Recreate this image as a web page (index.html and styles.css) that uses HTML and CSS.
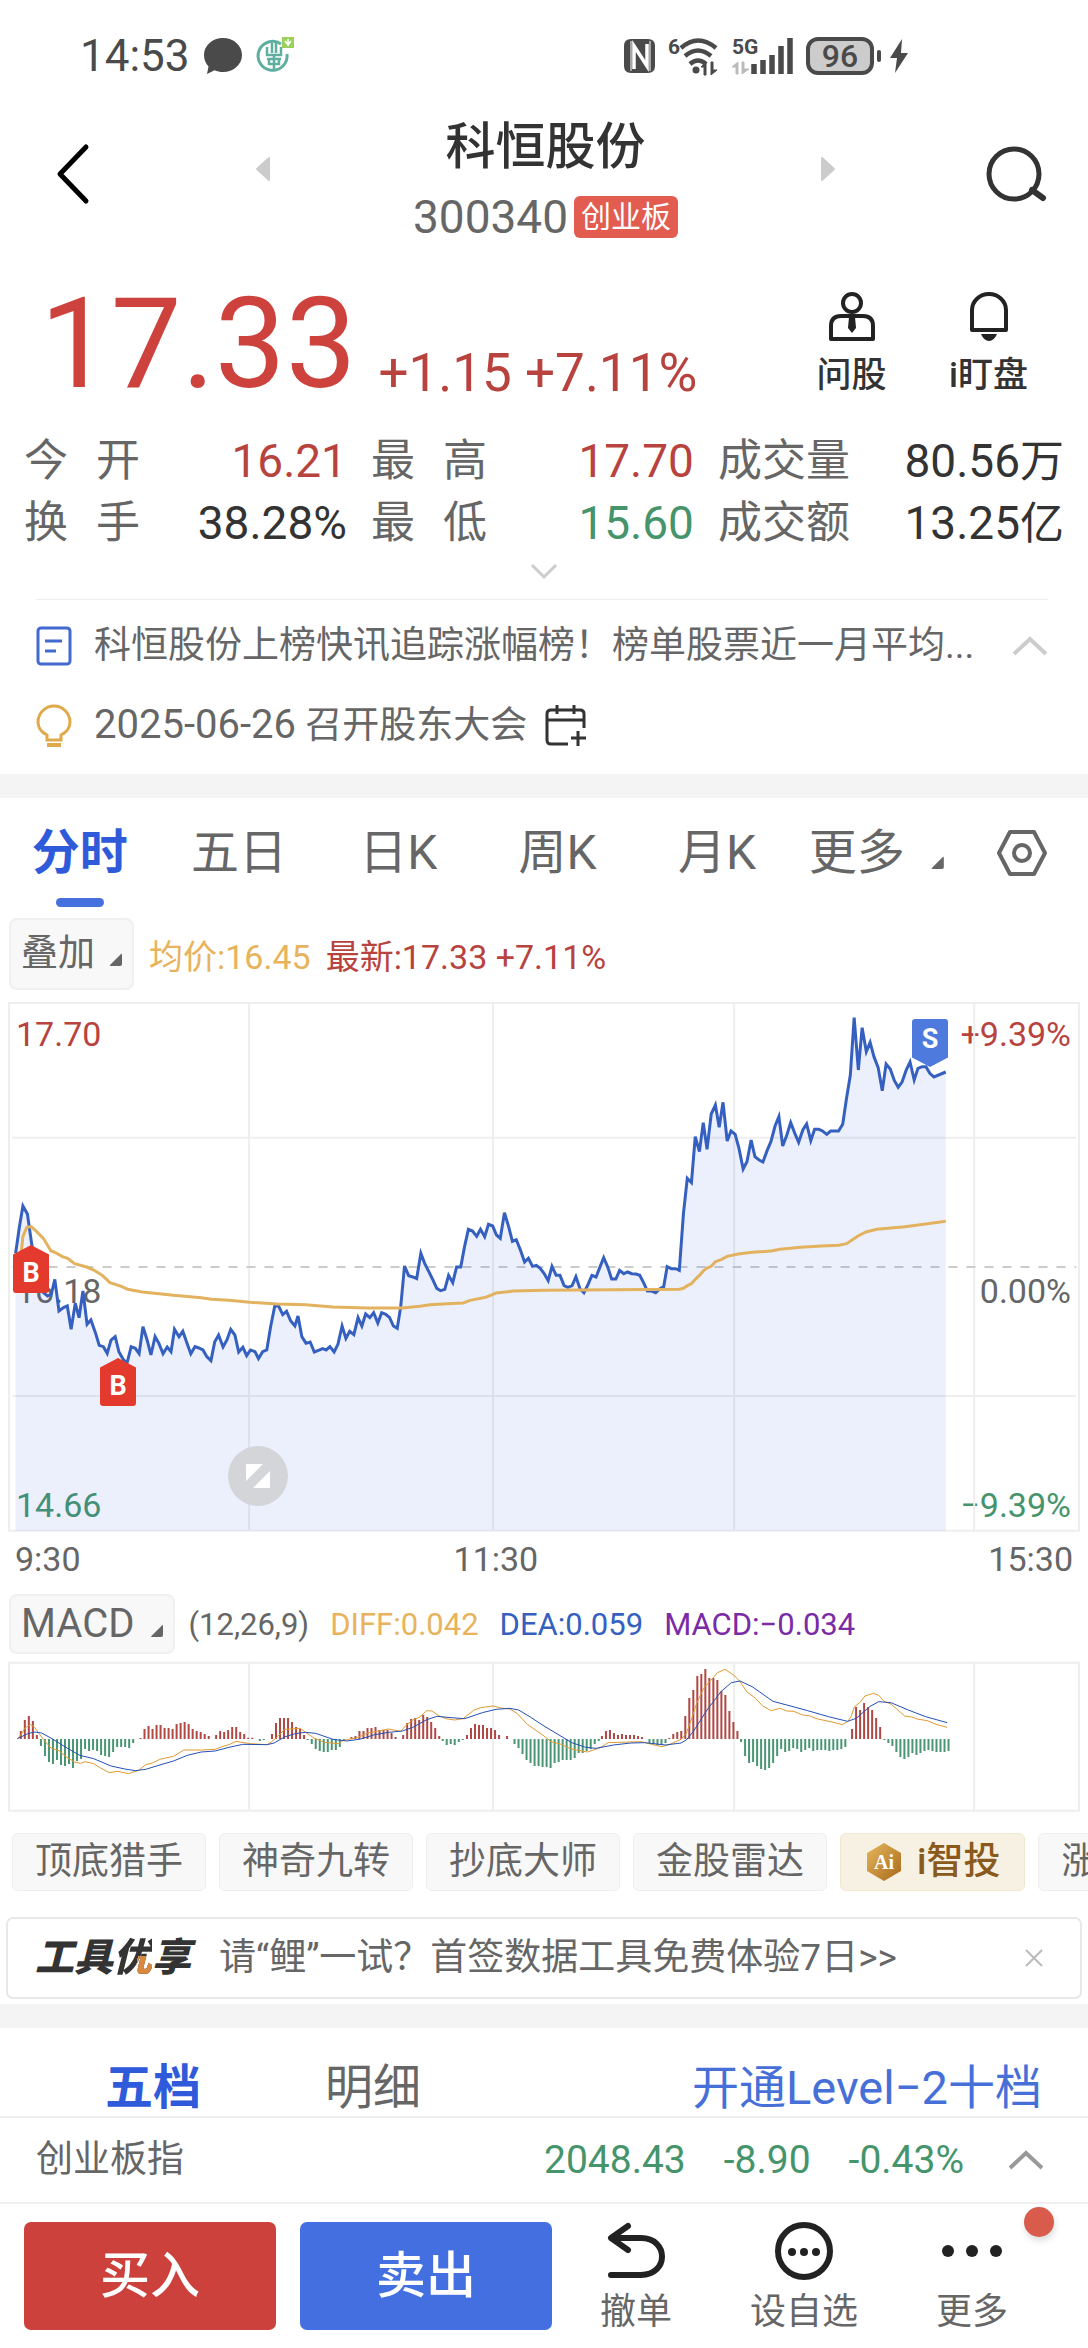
FILE: index.html
```html
<!DOCTYPE html>
<html lang="zh-CN">
<head>
  <meta charset="UTF-8" />
  <meta name="viewport" content="width=device-width, initial-scale=1.0" />
  <title>科恒股份 300340</title>
  <link rel="stylesheet" href="styles.css">
</head>
<body>
  <!-- Status bar -->
  <div class="status">
    <div class="status-left">
      <span class="clock">14:53</span>
      <svg width="38" height="36" viewBox="0 0 38 36"><path d="M19 0c10.500 0 19 7.500 19 17s-8.500 17-19 17c-3 0-6-.6-8.500-1.800L3 36l1.500-7.500C1.500 25.500 0 21.500 0 17 0 7.500 8.500 0 19 0z" fill="#4a4a4a"/></svg>
      <svg class="bank" width="38" height="38" viewBox="0 0 38 38">
        <g fill="none" stroke="#5fae9f" stroke-width="3"><path d="M25 7A14.500 14.500 0 1 0 31 17"/><path d="M16 6v10M20 6v10M11 10v8h14v-8M11 22h14M18 18v16M13 22v5h10v-5" stroke-width="2.500"/></g>
        <rect x="26" y="0" width="12" height="11" fill="#9bd05c"/><path d="M32 2v7M29 4l3 4 3-4" stroke="#fff" stroke-width="1.500" fill="none"/>
      </svg>
    </div>
    <div class="status-right">
      <svg width="34" height="36" viewBox="0 0 34 36"><path d="M9 1h17q7 0 7 7v20q0 7-7 7H9q-7 0-7-7V8q0-7 7-7z" fill="#4a4a4a"/><path d="M12 31V8l13 20V6" fill="none" stroke="#fff" stroke-width="3.500"/><path d="M9 3v30M28 3v30" stroke="#fff" stroke-width="1"/></svg>
      <svg width="52" height="40" viewBox="0 0 52 40">
        <text x="0" y="18" class="tiny">6</text>
        <g fill="none" stroke="#4a4a4a" stroke-width="4.500"><path d="M13 12q17-15 35 0"/><path d="M17 20q13-11 26 0"/><path d="M22 28q8-7 16 0"/></g>
        <circle cx="28" cy="34" r="3.500" fill="#4a4a4a"/><path d="M38 26v13h-2v-8h-3zM43 39V26h2v8h4z" fill="#4a4a4a" stroke="#4a4a4a"/>
      </svg>
      <svg width="62" height="40" viewBox="0 0 62 40">
        <text x="0" y="18" class="tiny">5G</text>
        <g stroke="#4a4a4a" stroke-width="5.500"><path d="M22 38V28M31 38V24M40 38V19M49 38V10M58 38V2"/></g>
        <path d="M6 26v12H4v-7H0zM10 38V26h2v7h5z" fill="#bbb" stroke="#bbb"/>
      </svg>
      <div class="battery">96</div>
      <svg width="18" height="36" viewBox="0 0 18 36"><path d="M12 1L0 20h7L5 35l13-20h-7z" fill="#4a4a4a"/></svg>
    </div>
  </div>

  <!-- Title -->
  <header class="header">
    <button class="icon-btn" aria-label="返回"><svg width="36" height="60" viewBox="0 0 36 60"><path d="M32 3L6 30l26 27" fill="none" stroke="#000" stroke-width="5" stroke-linecap="round" stroke-linejoin="round"/></svg></button>
    <button class="icon-btn prev" aria-label="上一只"><svg width="16" height="26" viewBox="0 0 16 26"><path d="M14 2v22L2 13z" fill="#ccc" stroke="#ccc" stroke-linejoin="round" stroke-width="2"/></svg></button>
    <div class="title">
      <h1>科恒股份</h1>
      <p><span class="code">300340</span><span class="board">创业板</span></p>
    </div>
    <button class="icon-btn next" aria-label="下一只"><svg width="16" height="26" viewBox="0 0 16 26"><path d="M2 2v22l12-11z" fill="#ccc" stroke="#ccc" stroke-linejoin="round" stroke-width="2"/></svg></button>
    <button class="icon-btn" aria-label="搜索"><svg width="62" height="60" viewBox="0 0 62 60"><circle cx="28" cy="30" r="25" fill="none" stroke="#333" stroke-width="5"/><path d="M46 46l11 8" stroke="#333" stroke-width="6" stroke-linecap="round"/></svg></button>
  </header>

  <!-- Quote -->
  <section class="quote">
    <div class="price-row">
      <span class="price">17.33</span>
      <span class="change">+1.15 +7.11%</span>
      <div class="actions">
        <button class="action">
          <svg width="48" height="50" viewBox="0 0 48 50"><g fill="none" stroke="#222" stroke-width="4"><circle cx="24" cy="11" r="9"/><path d="M3 47V34q0-10 10-10h22q10 0 10 10v13z" stroke-linejoin="round"/></g><path d="M21 25h6l1 11-4 5-4-5z" fill="#222"/></svg>
          问股
        </button>
        <button class="action">
          <svg width="40" height="50" viewBox="0 0 40 50"><path d="M3 38V18a17 16 0 0 1 34 0v20z" fill="none" stroke="#222" stroke-width="4" stroke-linejoin="round"/><path d="M12 42h16q-3 7-8 7t-8-7z" fill="#222"/></svg>
          i盯盘
        </button>
      </div>
    </div>

    <dl class="stats">
      <div><dt class="spread">今 开</dt><dd class="up">16.21</dd></div>
      <div><dt class="spread">最 高</dt><dd class="up">17.70</dd></div>
      <div><dt>成交量</dt><dd>80.56<small>万</small></dd></div>
      <div><dt class="spread">换 手</dt><dd>38.28%</dd></div>
      <div><dt class="spread">最 低</dt><dd class="down">15.60</dd></div>
      <div><dt>成交额</dt><dd>13.25<small>亿</small></dd></div>
    </dl>
    <button class="expand" aria-label="展开"><svg width="28" height="16" viewBox="0 0 28 16"><path d="M2 2l12 12L26 2" fill="none" stroke="#ccc" stroke-width="3"/></svg></button>
  </section>

  <!-- News -->
  <section class="news">
    <a class="news-row" href="#">
      <svg width="36" height="40" viewBox="0 0 36 40"><rect x="2" y="2" width="32" height="36" rx="3" fill="none" stroke="#4169d0" stroke-width="3"/><path d="M9 15h17M9 25h11" stroke="#4169d0" stroke-width="3"/></svg>
      <span class="news-text">科恒股份上榜快讯追踪涨幅榜！榜单股票近一月平均...</span>
      <svg width="36" height="20" viewBox="0 0 36 20"><path d="M2 18L18 3l16 15" fill="none" stroke="#ccc" stroke-width="4"/></svg>
    </a>
    <a class="news-row" href="#">
      <svg width="36" height="44" viewBox="0 0 36 44"><path d="M11 36v-5C5 28 2 23 2 18a16 16 0 0 1 32 0c0 5-3 10-9 13v5z" fill="none" stroke="#e0a94a" stroke-width="3"/><path d="M11 41h14" stroke="#e0a94a" stroke-width="4"/></svg>
      <span><span class="date">2025-06-26</span> 召开股东大会</span>
      <svg class="calendar" width="42" height="42" viewBox="0 0 42 42"><path d="M23 39H6q-4 0-4-4V9q0-4 4-4h29q4 0 4 4v14M2 15h37M12 0v9M29 0v9M33 26v15M26 33h15" fill="none" stroke="#333" stroke-width="3"/></svg>
    </a>
  </section>

  <!-- Chart tabs -->
  <nav class="tabs">
    <button class="tab active">分时</button>
    <button class="tab">五日</button>
    <button class="tab">日K</button>
    <button class="tab">周K</button>
    <button class="tab">月K</button>
    <button class="tab tab-more">更多<i class="corner"></i></button>
    <button class="settings" aria-label="设置"><svg width="52" height="48" viewBox="0 0 52 48"><path d="M14 3h24l11 21-11 21H14L3 24z" fill="none" stroke="#666" stroke-width="4" stroke-linejoin="round"/><circle cx="26" cy="24" r="8" fill="none" stroke="#666" stroke-width="4"/></svg></button>
  </nav>

  <div class="toolbar">
    <button class="select-btn overlay-btn">叠加<i class="corner"></i></button>
    <span class="avg">均价:16.45</span>
    <span class="up">最新:17.33 +7.11%</span>
  </div>

  <!-- Intraday chart -->
  <div class="chart">
    <div class="labels labels-left"><span class="up">17.70</span><span class="mid">16.18</span><span class="down">14.66</span></div>
    <div class="labels labels-right"><span class="up">+9.39%</span><span class="mid">0.00%</span><span class="down">−9.39%</span></div>
    <svg class="plot price-plot" viewBox="0 36 3136 1590" preserveAspectRatio="none">
      <path class="grid" d="M26 39H3110V1622H26zM36 443H3102M36 1218H3102M718 39V1622M1421 39V1622M2116 39V1622M2808 39V1622"/>
      <path class="zero" d="M36 831H3102"/>
      <polygon id="priceArea" class="area" points=""/>
      <polyline id="priceLine" class="line blue" points="45,790 56,710 66,648 79,672 91,760 102,830 114,880 125,908 137,918 148,912 158,868 170,963 183,953 194,948 205,1018 217,940 228,983 239,903 251,1003 262,990 275,1028 286,1066 298,1070 309,1090 320,1050 332,1040 343,1086 355,1108 366,1120 378,1070 390,1075 401,1091 412,1010 424,1050 435,1095 447,1040 458,1060 470,1091 482,1071 493,1085 503,1018 516,1040 527,1024 539,1060 550,1091 562,1070 573,1074 585,1080 596,1100 608,1112 619,1055 630,1035 643,1071 654,1050 665,1018 677,1035 688,1086 700,1072 711,1097 722,1080 735,1085 745,1106 757,1085 769,1080 780,1010 792,948 803,948 815,974 826,964 838,993 850,1008 859,978 870,1040 882,1060 894,1056 906,1086 918,1081 930,1076 940,1080 951,1070 963,1086 974,1063 986,1008 997,1045 1008,1024 1020,1034 1032,983 1043,1008 1054,972 1066,983 1077,968 1089,999 1100,968 1112,973 1123,983 1134,1008 1145,1015 1155,950 1166,828 1178,857 1190,861 1201,866 1213,790 1224,820 1236,845 1247,868 1259,895 1270,902 1282,898 1293,856 1305,878 1316,831 1328,831 1339,770 1350,718 1362,723 1374,739 1385,718 1397,740 1408,703 1420,708 1431,735 1442,745 1454,668 1466,710 1477,754 1488,749 1500,780 1512,816 1523,805 1535,829 1546,826 1557,835 1568,850 1580,872 1591,829 1603,856 1614,856 1626,887 1637,892 1649,887 1660,860 1672,897 1683,908 1695,883 1706,856 1718,861 1729,832 1740,803 1752,832 1763,867 1775,867 1786,841 1798,851 1809,846 1821,851 1833,852 1844,856 1856,880 1866,903 1878,903 1890,908 1901,897 1913,890 1923,830 1935,836 1948,836 1958,841 1970,670 1981,565 1993,578 2004,440 2016,485 2027,398 2038,478 2050,372 2062,345 2073,412 2084,337 2096,453 2107,423 2119,433 2130,475 2142,537 2153,515 2165,450 2176,500 2188,510 2199,516 2211,482 2222,455 2234,408 2245,380 2256,468 2268,435 2279,398 2291,430 2302,457 2314,420 2325,402 2337,452 2348,418 2360,418 2371,423 2383,433 2394,423 2417,423 2429,403 2440,325 2451,255 2462,83 2474,240 2485,113 2497,185 2508,157 2519,200 2531,232 2543,302 2554,222 2566,237 2578,272 2589,292 2600,276 2612,240 2623,216 2635,270 2646,235 2658,230 2669,230 2680,250 2692,261 2726,246"/>
      <polyline class="line gold" points="60,800 66,740 77,712 90,710 105,724 125,745 147,783 160,788 180,800 195,805 215,821 250,831 270,840 295,856 317,878 350,889 368,898 410,906 500,916 580,923 610,928 660,931 720,937 800,942 880,944 960,951 1060,954 1160,954 1210,949 1240,944 1290,941 1335,939 1355,931 1400,922 1430,909 1480,903 1568,901 1768,899 1958,898 1970,895 1981,887 1993,881 2004,868 2016,856 2028,842 2038,834 2050,829 2062,815 2080,808 2096,799 2128,792 2168,787 2223,783 2248,778 2308,772 2368,768 2418,766 2440,761 2456,750 2473,738 2496,726 2528,718 2608,710 2668,702 2726,694"/>
    </svg>
    <div class="marker buy buy-1">B</div>
    <div class="marker buy buy-2">B</div>
    <div class="marker sell">S</div>
    <button class="fullscreen" aria-label="全屏"><svg width="60" height="60" viewBox="0 0 60 60"><circle cx="30" cy="30" r="30" fill="#d4d5d9"/><path d="M18 18h17L18 35zM42 25v17H25z" fill="#fff"/></svg></button>
  </div>
  <div class="times"><span>9:30</span><span>11:30</span><span>15:30</span></div>

  <!-- MACD -->
  <div class="toolbar macd-bar">
    <button class="select-btn macd-btn">MACD<i class="corner"></i></button>
    <span>(12,26,9)</span>
    <span class="avg">DIFF:0.042</span>
    <span class="dea">DEA:0.059</span>
    <span class="macd">MACD:−0.034</span>
  </div>
  <svg class="plot macd-plot" viewBox="0 213 3136 456" preserveAspectRatio="none">
    <path class="grid" d="M26 218H3110V662H26zM718 218V662M1421 218V662M2116 218V662M2808 218V662"/>
    <path id="barsUp" class="bars bars-up" d=""/>
    <path id="barsDown" class="bars bars-down" d=""/>
    <polyline class="line thin gold" points="50,446 62,432 72,414 88,404 100,412 112,430 125,448 147,474 170,482 190,500 215,516 232,520 245,515 270,521 290,534 315,548 340,544 370,551 400,541 420,524 440,519 460,508 500,499 530,480 580,480 620,478 640,470 660,464 680,454 720,461 770,464 782,456 800,440 820,418 865,415 885,430 905,444 935,457 975,461 990,451 1030,443 1060,429 1120,417 1155,424 1170,406 1190,390 1210,381 1230,362 1245,363 1265,377 1285,386 1310,390 1335,386 1365,361 1385,353 1421,348 1445,354 1470,357 1490,370 1520,403 1568,438 1588,455 1618,463 1643,476 1693,486 1728,474 1753,458 1848,455 1878,463 1908,470 1928,464 1963,448 1978,430 1993,388 2008,340 2028,295 2048,272 2068,248 2090,238 2118,258 2133,275 2153,306 2178,325 2198,348 2223,362 2248,355 2268,363 2288,364 2313,375 2333,377 2353,386 2398,396 2428,404 2443,395 2453,380 2463,350 2478,338 2493,318 2518,310 2533,316 2548,334 2568,342 2588,360 2608,378 2628,381 2643,387 2673,392 2698,403 2730,412"/>
    <polyline class="line thin blue" points="50,446 80,431 100,426 120,429 150,446 190,472 230,496 270,506 320,528 360,537 390,542 420,538 470,522 500,513 540,496 580,486 620,483 660,472 700,463 770,464 790,459 820,441 850,431 880,427 910,430 960,448 1000,453 1040,447 1080,434 1120,427 1160,423 1190,412 1230,389 1260,379 1300,383 1340,386 1390,368 1430,358 1470,355 1495,360 1530,382 1568,408 1608,433 1648,458 1688,472 1718,475 1768,465 1818,459 1858,458 1918,465 1963,459 1978,450 1998,425 2038,360 2078,305 2108,278 2133,273 2168,290 2228,334 2268,345 2328,362 2388,380 2443,394 2468,385 2508,349 2533,335 2568,338 2618,360 2668,380 2730,398"/>
  </svg>

  <!-- Indicator chips -->
  <div class="chips">
    <button class="chip">顶底猎手</button>
    <button class="chip">神奇九转</button>
    <button class="chip">抄底大师</button>
    <button class="chip">金股雷达</button>
    <button class="chip chip-gold">
      <svg width="38" height="40" viewBox="0 0 38 40"><defs><linearGradient id="hex" x1="0" y1="0" x2="1" y2="1"><stop offset="0" stop-color="#e6b85c"/><stop offset="1" stop-color="#a8681c"/></linearGradient></defs><path d="M19 1l17 10v18L19 39 2 29V11z" fill="url(#hex)"/><text x="19" y="27" text-anchor="middle" class="ai">Ai</text></svg>
      i智投
    </button>
    <button class="chip">涨停</button>
  </div>

  <!-- Promo -->
  <div class="promo">
    <strong class="promo-logo">工具<span class="promo-accent">优</span>享</strong>
    <a href="#">请“鲤”一试？首签数据工具免费体验7日&gt;&gt;</a>
    <button class="icon-btn" aria-label="关闭"><svg width="20" height="20" viewBox="0 0 20 20"><path d="M2 2l16 16M18 2L2 18" stroke="#bbb" stroke-width="2"/></svg></button>
  </div>

  <!-- Order book tabs -->
  <nav class="book-tabs">
    <button class="tab active">五档</button>
    <button class="tab">明细</button>
    <a href="#">开通Level−2十档</a>
  </nav>
  <div class="index-row">
    <span class="index-name">创业板指</span>
    <span>2048.43</span>
    <span>-8.90</span>
    <span>-0.43%</span>
    <svg width="36" height="20" viewBox="0 0 36 20"><path d="M2 18L18 3l16 15" fill="none" stroke="#999" stroke-width="4"/></svg>
  </div>

  <!-- Bottom actions -->
  <footer class="bottom">
    <button class="trade buy-btn">买入</button>
    <button class="trade sell-btn">卖出</button>
    <button class="tool"><svg width="60" height="58" viewBox="0 0 60 58"><path d="M22 4L5 16l17 12M6 16h29c28 0 28 37 0 37H5" fill="none" stroke="#222" stroke-width="6" stroke-linejoin="round" stroke-linecap="round"/></svg>撤单</button>
    <button class="tool"><svg width="60" height="58" viewBox="0 0 60 58"><circle cx="30" cy="29" r="26" fill="none" stroke="#222" stroke-width="6"/><circle cx="18" cy="30" r="4"/><circle cx="30" cy="30" r="4"/><circle cx="42" cy="30" r="4"/></svg>设自选</button>
    <button class="tool"><svg width="60" height="58" viewBox="0 0 60 58"><circle cx="6" cy="29" r="6"/><circle cx="30" cy="29" r="6"/><circle cx="54" cy="29" r="6"/></svg>更多<i class="dot"></i></button>
  </footer>

  <script>
    // Close the price line down to the chart floor
    const line = document.getElementById("priceLine").getAttribute("points");
    document.getElementById("priceArea").setAttribute("points", "45,1622 " + line + " 2726,1622");

    // MACD histogram runs: start x, then one value per minute
    const zero = 447;
    const step = 11.56;
    const runs = [
      [60, 24, 57, 69, 54, 12],
      [118, -21, -51, -69, -75, -63, -78, -81, -75, -87, -66, -60, -30, -36, -33, -36, -48, -51, -54, -39, -24, -24, -24, -27, -12],
      [405, 3, 30, 39, 30, 42, 42, 33, 33, 30, 45, 48, 51, 45, 30, 24, 21, 15, 9],
      [623, 12, 24, 21, 27, 36, 36, 21, 15, 4, 4],
      [749, -6, -3],
      [784, 15, 48, 63, 63, 63, 51, 36, 30, 12],
      [887, -3, -15, -30, -36, -39, -39, -33, -33, -24, -6],
      [1013, 6, 9, 24, 24, 33, 33, 36, 27, 27, 27, 18, 6],
      [1162, 12, 48, 60, 63, 57, 72, 66, 51, 33, 9],
      [1276, -6, -18, -15, -18, -9, -3],
      [1346, 12, 33, 45, 42, 42, 33, 33, 27, 12, 0, 9],
      [1483, -15, -27, -45, -63, -72, -81, -81, -84, -84, -87, -72, -69, -63, -63, -63, -57, -42, -42, -36, -30, -15, -6],
      [1735, 9, 24, 27, 18, 12, 15, 12, 12, 12, 9, 6],
      [1872, -12, -15, -18, -18, -12],
      [1929, 3, 15, 21, 24, 69, 123, 147, 189, 195, 210, 183, 183, 177, 144, 132, 84, 51, 24],
      [2136, -9, -51, -72, -69, -81, -90, -93, -87, -72, -51, -30, -39, -36, -27, -30, -39, -33, -27, -36, -33, -33, -33, -36, -33, -33, -30, -24],
      [2456, 30, 96, 87, 108, 96, 87, 63, 36],
      [2549, -3, -12, -21, -39, -54, -60, -54, -42, -48, -42, -36, -33, -36, -39, -39, -39, -36]
    ];
    let up = "", down = "";
    runs.forEach(([start, ...values]) => {
      values.forEach((v, i) => {
        const bar = `M${start + i * step} ${zero}v${-v}`;
        if (v > 0) up += bar;
        if (v < 0) down += bar;
      });
    });
    document.getElementById("barsUp").setAttribute("d", up);
    document.getElementById("barsDown").setAttribute("d", down);
  </script>
</body>
</html>
```
FILE: styles.css
```css
* { box-sizing: border-box; }
body {
  margin: 0;
  background: #fff;
  color: #666;
  font-family: Roboto, "Noto Sans CJK SC", sans-serif;
  font-size: 37px;
  overflow-x: hidden;
}
button {
  margin: 0;
  padding: 0;
  border: none;
  background: none;
  color: inherit;
  font: inherit;
}
a { color: inherit; text-decoration: none; }
h1, p, dl, dd { margin: 0; }
svg { display: block; flex: none; overflow: visible; }
.up { color: #b8433e; }
.down { color: #45946b; }
.avg { color: #e8b35c; }

/* Status bar */
.status {
  display: flex;
  justify-content: space-between;
  padding: 36px 180px 0 80px;
  color: #4a4a4a;
}
.status-left, .status-right {
  display: flex;
  align-items: center;
  gap: 12px;
  height: 40px;
}
.status-left { gap: 14px; }
.clock { font-size: 44px; line-height: 40px; }
.tiny { font-size: 21px; font-weight: 700; fill: #4a4a4a; }
.battery {
  position: relative;
  width: 68px;
  margin-right: 4px;
  border: 4px solid #4a4a4a;
  border-radius: 12px;
  background: #ccc;
  font-size: 32px;
  font-weight: 500;
  line-height: 30px;
  text-align: center;
}
.battery::after {
  content: "";
  position: absolute;
  right: -11px;
  top: 9px;
  width: 4px;
  height: 12px;
  border-radius: 2px;
  background: #4a4a4a;
}

/* Title */
.header {
  display: flex;
  align-items: flex-start;
  padding: 46px 40px 0 54px;
}
.icon-btn { margin-top: 22px; }
.prev { margin: 34px 0 0 165px; }
.next { margin: 34px 150px 0 0; }
.title { flex: 1; text-align: center; }
.title h1 {
  color: #333;
  font-size: 50px;
  font-weight: 500;
  line-height: 50px;
}
.title p {
  display: flex;
  align-items: center;
  justify-content: center;
  gap: 6px;
  margin-top: 24px;
  line-height: 42px;
}
.code { font-size: 46px; }
.board {
  padding: 0 7px;
  border-radius: 6px;
  background: #e25c50;
  color: #fff;
  font-size: 30px;
}

/* Quote */
.quote { padding: 54px 24px 0; }
.price-row { display: flex; align-items: flex-end; padding-left: 16px; }
.price { color: #cd423c; font-size: 126px; line-height: 102px; }
.change { margin-left: 22px; color: #b8433e; font-size: 53px; line-height: 44px; }
.actions { display: flex; margin: 0 7px 0 auto; }
.action {
  display: flex;
  flex-direction: column;
  align-items: center;
  gap: 15px;
  width: 137px;
  color: #333;
  font-size: 35px;
  font-weight: 500;
  line-height: 38px;
}
.stats {
  display: grid;
  grid-template-columns: 14fr 14fr 15fr;
  column-gap: 24px;
  margin-top: 36px;
  font-size: 44px;
  line-height: 61px;
}
.stats div { display: flex; justify-content: space-between; }
.spread { width: 116px; text-align-last: justify; }
.stats dd { font-size: 46px; }
.stats dd:not([class]) { color: #333; }
.stats small { font-size: 44px; }
.expand {
  display: block;
  width: 100%;
  padding: 8px 0 20px;
}
.expand svg { margin: 0 auto; }

/* News */
.news { border-bottom: 24px solid #f4f4f4; padding: 0 40px 8px 36px; }
.news::before {
  content: "";
  display: block;
  height: 1px;
  margin-bottom: 6px;
  background: #eee;
}
.news-row { display: flex; align-items: center; gap: 22px; line-height: 80px; }
.news-text { flex: 1; white-space: nowrap; overflow: hidden; }
.date { font-size: 40px; line-height: 40px; }
.calendar { margin-left: -4px; }

/* Tabs */
.tabs { display: flex; }
.tab { font-size: 48px; }
.tabs .tab { position: relative; flex: 1; line-height: 110px; }
.tab.active { color: #2f5bdb; font-weight: 700; }
.tabs .active::after {
  content: "";
  position: absolute;
  left: 50%;
  bottom: 1px;
  width: 48px;
  height: 9px;
  margin-left: -24px;
  border-radius: 5px;
  background: #4670de;
}
.settings { display: flex; align-items: center; justify-content: center; width: 132px; }
.corner {
  display: inline-block;
  width: 13px;
  height: 13px;
  border-radius: 2px;
  background: #666;
  clip-path: polygon(100% 0, 100% 100%, 0 100%);
}
.tab-more .corner { margin-left: 26px; }
.toolbar {
  display: flex;
  align-items: center;
  gap: 15px;
  padding: 10px 9px 0;
  font-size: 34px;
}
.select-btn {
  border: 2px solid #f0f0f0;
  border-radius: 8px;
  background: #f8f8f8;
  padding: 0 10px;
}
.overlay-btn { font-size: 37px; line-height: 68px; }
.overlay-btn .corner { margin-left: 14px; }

/* Charts */
.chart { position: relative; margin-top: 12px; }
.plot { position: relative; width: 100%; }
.price-plot { height: 530px; }
.macd-plot { height: 152px; margin-top: 7px; }
.plot * { vector-effect: non-scaling-stroke; }
.grid { fill: none; stroke: #eee; stroke-width: 2; }
.zero { stroke: #ccc; stroke-width: 2; stroke-dasharray: 9 9; }
.area { fill: rgba(65, 105, 235, 0.1); }
.line { fill: none; stroke-width: 3; }
.blue { stroke: #3560c0; }
.gold { stroke: #e3b25f; }
.line.thin { stroke-width: 1; }
.thin.blue { stroke: #2450b5; }
.thin.gold { stroke: #e09a30; }
.bars { stroke-width: 2; }
.bars-up { stroke: #b04844; }
.bars-down { stroke: #4a9674; }
.labels {
  position: absolute;
  top: 12px;
  bottom: 7px;
  display: flex;
  flex-direction: column;
  justify-content: space-between;
  font-size: 34px;
  line-height: 40px;
}
.labels-left { left: 16px; }
.labels-right { right: 17px; text-align: right; }
.mid { padding-top: 42px; }
.marker {
  position: absolute;
  width: 36px;
  height: 48px;
  border-radius: 3px;
  color: #fff;
  font-size: 27px;
  font-weight: 700;
  text-align: center;
}
.buy {
  background: #e4392d;
  line-height: 56px;
  clip-path: polygon(50% 0, 100% 20%, 100% 100%, 0 100%, 0 20%);
}
.buy-1 { left: 13px; top: 243px; }
.buy-2 { left: 100px; top: 356px; }
.sell {
  left: 912px;
  top: 17px;
  background: #4e7ade;
  line-height: 40px;
  clip-path: polygon(0 0, 100% 0, 100% 80%, 50% 100%, 0 80%);
}
.fullscreen { position: absolute; left: 228px; top: 444px; }
.times {
  display: grid;
  grid-template-columns: 9fr 2fr 11fr;
  padding: 0 15px;
  font-size: 34px;
  line-height: 54px;
}
.times span:nth-child(2) { text-align: center; }
.times span:last-child { text-align: right; }
.macd-bar { gap: 21px; padding-top: 8px; font-size: 31px; }
.macd-btn { font-size: 40px; line-height: 56px; }
.macd-btn + span { margin-left: -8px; }
.macd-btn .corner { margin-left: 16px; }
.dea { color: #3560c0; }
.macd { color: #7a2ba5; }

/* Chips */
.chips {
  display: flex;
  gap: 13px;
  padding: 20px 0 0 12px;
  overflow: hidden;
}
.chip {
  flex: none;
  padding: 0 22px;
  border: 1px solid #eee;
  border-radius: 6px;
  background: #f8f8f8;
  line-height: 56px;
}
.chip-gold {
  display: flex;
  align-items: center;
  gap: 14px;
  padding: 0 24px;
  border-color: #efe8cf;
  background: #f6f1e2;
  color: #8a5a1c;
  font-weight: 500;
}
.ai { fill: #fff; font: 700 20px "Liberation Serif", serif; }

/* Promo */
.promo {
  display: flex;
  align-items: center;
  margin: 26px 6px 5px;
  padding: 0 36px 0 27px;
  border: 2px solid #e8e8e8;
  border-radius: 7px;
  line-height: 78px;
}
.promo .icon-btn { margin: 0; }
.promo a { flex: 1; margin-left: 28px; white-space: nowrap; }
.promo-logo {
  color: #333;
  font-size: 39px;
  font-style: italic;
  font-weight: 900;
}
.promo-accent {
  background: linear-gradient(100deg, transparent 57%, #d9883f 57%) 0 100% / 100% 55% no-repeat, #333;
  -webkit-background-clip: text;
  background-clip: text;
  color: transparent;
}

/* Order book */
.book-tabs {
  display: flex;
  align-items: center;
  padding: 32px 46px 0 105px;
  border-top: 24px solid #f4f4f4;
  border-bottom: 2px solid #eee;
  line-height: 56px;
}
.book-tabs .tab + .tab { margin-left: 124px; }
.book-tabs a { margin-left: auto; color: #4670d8; font-size: 47px; }
.index-row {
  display: flex;
  align-items: center;
  gap: 38px;
  padding: 0 44px 0 36px;
  border-bottom: 2px solid #f0f0f0;
  color: #45946b;
  font-size: 39px;
  line-height: 84px;
}
.index-row svg { margin-left: 6px; }
.index-name { flex: 1; color: #666; font-size: 37px; }

/* Bottom actions */
.bottom { display: flex; gap: 24px; padding: 18px 32px 18px 24px; }
.trade {
  flex: 3;
  border-radius: 7px;
  color: #fff;
  font-size: 50px;
  font-weight: 500;
  line-height: 108px;
}
.buy-btn { background: #cc413c; }
.sell-btn { background: #446fe0; }
.tool {
  position: relative;
  flex: 2;
  display: flex;
  flex-direction: column;
  align-items: center;
  gap: 14px;
  margin-left: -24px;
  font-size: 36px;
  line-height: 36px;
}
.tool svg { fill: #222; }
.dot {
  position: absolute;
  right: 2px;
  top: -15px;
  width: 30px;
  height: 30px;
  border-radius: 50%;
  background: #d95b4b;
  box-shadow: 1px 4px 6px #ddd;
}
```
